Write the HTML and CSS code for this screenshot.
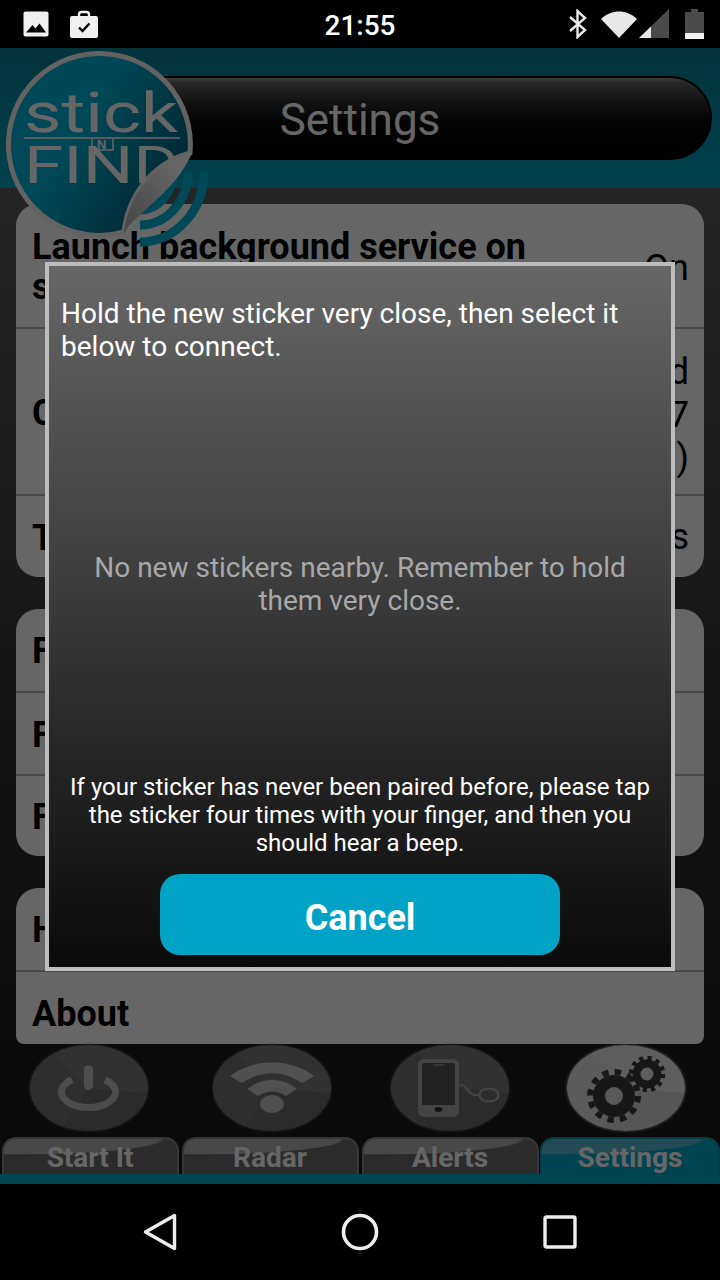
FILE: index.html
```html
<!DOCTYPE html>
<html lang="en">
<head>
    <meta charset="UTF-8">
    <meta name="viewport" content="width=device-width, initial-scale=1.0">
    <title>Settings</title>
    <link rel="stylesheet" href="styles.css">
</head>
<body>
    <div class="phone">
        <div class="status-bar">
            <div class="status-left">
                <svg width="26" height="26" viewBox="0 0 26 26"><rect x="0.5" y="0.5" width="25" height="25" rx="2" fill="#f0f0f0"/><path d="M3 21.5 L9.5 14 L12.5 17.5 L16.5 12.5 L23 21.5 Z" fill="#000"/></svg>
                <svg width="28" height="28" viewBox="0 0 28 28"><path d="M9 8 V4.5 a2.5 2.5 0 0 1 2.5 -2.5 h5 a2.5 2.5 0 0 1 2.5 2.5 V8" fill="none" stroke="#f0f0f0" stroke-width="2.4"/><rect x="0" y="6" width="28" height="22" rx="2" fill="#f0f0f0"/><path d="M9 17.5 l3.5 3.5 l7 -7.5" fill="none" stroke="#000" stroke-width="2.4"/></svg>
            </div>
            <span class="clock">21:55</span>
            <div class="status-right">
                <svg class="ic-bt" width="20" height="30" viewBox="0 0 20 30"><path d="M2 8 L17 21 L9.5 28 V2 L17 9 L2 22" fill="none" stroke="#e8e8e8" stroke-width="2.4"/></svg>
                <svg class="ic-wifi" width="36" height="28" viewBox="0 0 36 28"><path d="M0 9 C10 -1 26 -1 36 9 L18 28 Z" fill="#e8e8e8"/></svg>
                <svg class="ic-signal" width="30" height="30" viewBox="0 0 30 30"><path d="M30 0 V29 H0 Z" fill="#4a4a4a"/><path d="M12 17.5 V29 H0 Z" fill="#e8e8e8"/></svg>
                <svg class="ic-batt" width="19" height="30" viewBox="0 0 19 30"><path d="M6 0 H13 V3 H19 V30 H0 V3 H6 Z" fill="#4a4a4a"/><rect x="0" y="24" width="19" height="6" fill="#f0f0f0"/></svg>
            </div>
        </div>

        <div class="app">
            <header class="app-header">
                <div class="title-pill">Settings</div>
            </header>

            <main class="settings">
                <section class="group">
                    <div class="row row-first">
                        <span class="row-label">Launch background service on startup</span>
                        <span class="row-value">On</span>
                    </div>
                    <div class="row row-tall">
                        <span class="row-label">C</span>
                        <span class="row-value">d<br>7<br>)</span>
                    </div>
                    <div class="row row-last">
                        <span class="row-label">T</span>
                        <span class="row-value">s</span>
                    </div>
                </section>
                <section class="group">
                    <div class="row"><span class="row-label">F</span></div>
                    <div class="row row-last"><span class="row-label">F</span></div>
                    <div class="row"><span class="row-label">F</span></div>
                </section>
                <section class="group group-cut">
                    <div class="row"><span class="row-label">H</span></div>
                    <div class="row row-about"><span class="row-label">About</span></div>
                </section>
            </main>

            <nav class="tabs">
                <div class="tab tab-start">
                    <div class="tab-disc">
                        <svg width="61" height="46" viewBox="0 0 61 46"><path d="M14 14.7 A27 15.5 0 1 0 47 14.7" fill="none" stroke="#fff" stroke-opacity=".55" stroke-width="7"/><rect x="26" y="0" width="9" height="25" rx="4.5" fill="#fff" fill-opacity=".55"/></svg>
                    </div>
                    <div class="tab-label">Start It</div>
                </div>
                <div class="tab tab-radar">
                    <div class="tab-disc">
                        <svg width="84" height="52" viewBox="0 0 84 52"><path d="M0 14 C24 -4 60 -4 84 14 L72 21 C52 8 32 8 12 21 Z M17 27 C32 15 52 15 67 27 L56 34 C47 28 37 28 28 34 Z" fill="#fff" fill-opacity=".6"/><ellipse cx="42" cy="42" rx="12" ry="9" fill="#fff" fill-opacity=".6"/></svg>
                    </div>
                    <div class="tab-label">Radar</div>
                </div>
                <div class="tab">
                    <div class="tab-disc">
                        <svg width="104" height="58" viewBox="-20 0 104 58">
                            <rect x="2" y="2" width="37" height="54" rx="4" fill="#555" stroke="#aaa" stroke-width="4"/>
                            <path d="M2 46 H39 V52 a4 4 0 0 1 -4 4 H6 a4 4 0 0 1 -4 -4 Z" fill="#aaa"/>
                            <ellipse cx="20.5" cy="50.5" rx="4" ry="2.5" fill="#333"/>
                            <path d="M15 6 H26" stroke="#888" stroke-width="2"/>
                            <path d="M41 27 C47 22 50 37 58 36 L62 36" fill="none" stroke="#aaa" stroke-width="2"/>
                            <ellipse cx="71" cy="36" rx="9.5" ry="6.5" fill="none" stroke="#aaa" stroke-width="2.2"/>
                        </svg>
                    </div>
                    <div class="tab-label">Alerts</div>
                </div>
                <div class="tab tab-active">
                    <div class="tab-disc">
                        <svg width="118" height="86" viewBox="0 0 118 86">
                            <circle cx="47" cy="51" r="15" fill="none" stroke="#3a3a3a" stroke-width="12"/>
                            <circle cx="47" cy="51" r="24" fill="none" stroke="#3a3a3a" stroke-width="6" stroke-dasharray="6.3 6.27"/>
                            <circle cx="80" cy="29" r="10.5" fill="none" stroke="#3a3a3a" stroke-width="8"/>
                            <circle cx="80" cy="29" r="16" fill="none" stroke="#3a3a3a" stroke-width="4.5" stroke-dasharray="4.2 4.18"/>
                        </svg>
                    </div>
                    <div class="tab-label">Settings</div>
                </div>
            </nav>
            <div class="tabs-line"></div>

            <svg class="logo" width="216" height="204" viewBox="0 0 216 204">
                <defs>
                    <linearGradient id="logoFill" x1="0.35" y1="0.45" x2="0.85" y2="0.75">
                        <stop offset="0" stop-color="#00b4dc"/>
                        <stop offset="1" stop-color="#006a82"/>
                    </linearGradient>
                    <linearGradient id="curlFill" x1="0.2" y1="0.9" x2="0.8" y2="0.2">
                        <stop offset="0" stop-color="#b8b8b8"/>
                        <stop offset="1" stop-color="#ffffff"/>
                    </linearGradient>
                </defs>
                <path d="M140 194 A64 70 0 0 0 204 124 M140 177 A48 53 0 0 0 188 124 M140 162 A33 38 0 0 0 173 124" fill="none" stroke="#00b4dc" stroke-width="9"/>
                <path d="M190 105 A91 91 0 1 0 124 184 C128 150 150 116 190 105 Z" fill="url(#logoFill)" stroke="#f4f4f4" stroke-width="5"/>
                <text class="logo-word" x="24" y="84" textLength="154" lengthAdjust="spacingAndGlyphs">stick</text>
                <path d="M24 90 H91 M114 90 H180" stroke="#fff" stroke-width="1.5"/>
                <rect x="92" y="90" width="21" height="12" fill="none" stroke="#fff" stroke-width="1.5"/>
                <text class="logo-n" x="97" y="100.5">N</text>
                <text class="logo-word logo-find" x="24" y="135" textLength="156" lengthAdjust="spacingAndGlyphs">FIND</text>
                <path d="M192 105 C150 116 128 150 124 185 C135 165 175 145 192 105 Z" fill="url(#curlFill)"/>
            </svg>

            <div class="scrim"></div>

            <div class="dialog">
                <p class="dialog-intro">Hold the new sticker very close, then select it below to connect.</p>
                <p class="dialog-empty">No new stickers nearby. Remember to hold them very close.</p>
                <p class="dialog-hint">If your sticker has never been paired before, please tap the sticker four times with your finger, and then you should hear a beep.</p>
                <button class="cancel-btn">Cancel</button>
            </div>
        </div>

        <div class="nav-bar">
            <svg width="34" height="38" viewBox="0 0 34 38"><path d="M31.5 2.5 V35.5 L2.5 19 Z" fill="none" stroke="#eee" stroke-width="3.4" stroke-linejoin="round"/></svg>
            <svg width="38" height="38" viewBox="0 0 38 38"><circle cx="19" cy="19" r="16.5" fill="none" stroke="#eee" stroke-width="3.6"/></svg>
            <svg width="34" height="34" viewBox="0 0 34 34"><rect x="2" y="2" width="30" height="30" rx="1.5" fill="none" stroke="#eee" stroke-width="3.4"/></svg>
        </div>
    </div>
</body>
</html>
```

FILE: styles.css
```css
* {
    box-sizing: border-box;
}
html, body {
    margin: 0;
    padding: 0;
    background: #000;
}
body {
    font-family: Roboto, "Noto Sans", sans-serif;
}
.phone {
    width: 720px;
    height: 1280px;
    display: flex;
    flex-direction: column;
    overflow: hidden;
}

/* status bar */
.status-bar {
    height: 48px;
    flex: none;
    display: flex;
    align-items: center;
    justify-content: space-between;
    position: relative;
    background: #000;
    padding: 0 16px 0 23px;
}
.status-left, .status-right {
    display: flex;
    align-items: center;
}
.status-left {
    gap: 21px;
}
.ic-wifi {
    margin-left: 13px;
}
.ic-signal {
    margin-left: 2px;
}
.ic-batt {
    margin-left: 16px;
}
.clock {
    position: absolute;
    left: 0;
    right: 0;
    top: 9px;
    text-align: center;
    color: #fff;
    font-size: 28px;
    font-weight: 500;
}

/* app */
.app {
    position: relative;
    height: 1136px;
    flex: none;
    display: flex;
    flex-direction: column;
    overflow: hidden;
    background: #000;
}
.app-header {
    height: 140px;
    flex: none;
    background: linear-gradient(#0a7f92, #00a4c4);
    padding: 28px 8px 0 28px;
}
.title-pill {
    height: 84px;
    border-radius: 42px;
    border: 2px solid #000;
    background: linear-gradient(#a0a0a0 0, #666 5%, #2c2c2c 30%, #0c0c0c 55%, #000);
    color: #fff;
    font-size: 44px;
    display: flex;
    align-items: center;
    justify-content: center;
    padding: 4px 20px 0 0;
}
.settings {
    height: 856px;
    flex: none;
    overflow: hidden;
    background: linear-gradient(#5c5c5c, #1c1c1c);
    padding: 16px 16px 0;
    display: flex;
    flex-direction: column;
    gap: 32px;
}
.group {
    background: #fff;
    border-radius: 22px;
    flex: none;
}
.group-cut {
    height: 156px;
    overflow: hidden;
    border-radius: 22px 22px 8px 8px;
}
.row {
    min-height: 82px;
    padding: 2px 15px 0 16px;
    display: flex;
    align-items: center;
    justify-content: space-between;
    border-top: 2px solid #b8b8b8;
    color: #000;
    font-size: 36px;
}
.row:first-child {
    border-top: 0;
}
.row-first {
    min-height: 123px;
    align-items: flex-start;
    padding-top: 23px;
}
.row-tall {
    min-height: 167px;
}
.row-tall .row-value {
    padding-top: 6px;
}
.row-last {
    min-height: 83px;
}
.row-about {
    min-height: 84px;
}
.row-label {
    font-weight: 700;
    width: 520px;
    line-height: 40px;
}
.row-value {
    font-weight: 400;
    text-align: right;
    line-height: 43px;
}
.row-first .row-value {
    padding-top: 20px;
}

/* bottom tabs */
.tabs {
    flex: 1;
    display: grid;
    grid-template-columns: repeat(4, 1fr);
    background: #1a1a1a;
}
.tab {
    display: flex;
    flex-direction: column;
    align-items: center;
    justify-content: flex-end;
}
.tab-disc {
    width: 118px;
    height: 86px;
    border-radius: 50%;
    margin-bottom: 6px;
    background: conic-gradient(from -45deg, #7c7c7c 0 140deg, #6c6c6c 140deg 260deg, #747474 260deg);
    box-shadow: 0 0 3px #777;
    display: flex;
    align-items: center;
    justify-content: center;
}
.tab-start .tab-disc {
    margin-right: 3px;
}
.tab-radar .tab-disc {
    margin-left: 3px;
}
.tab-active .tab-disc {
    margin-right: 8px;
    background: conic-gradient(from -45deg, #ececec 0 140deg, #d8d8d8 140deg 260deg, #e4e4e4 260deg);
    box-shadow: 0 0 3px #ddd;
}
.tab-label {
    width: 177px;
    height: 37px;
    border: 2px solid #888;
    border-bottom: 0;
    border-radius: 14px 14px 0 0;
    background: radial-gradient(ellipse 85% 45% at 8% 0, #b4b4b4 0 96%, transparent 100%), #6c6c6c;
    color: #fff;
    font-size: 28px;
    font-weight: 700;
    line-height: 37px;
    text-align: center;
}
.tab-active .tab-label {
    width: 180px;
    border-color: #0a9ab2;
    background: radial-gradient(ellipse 85% 45% at 8% 0, #55bcd0 0 96%, transparent 100%), #00a8ca;
}
.tabs-line {
    height: 10px;
    flex: none;
    background: #00a8ca;
}

/* dialog on top */
.logo {
    position: absolute;
    left: 0;
    top: 0;
}
.logo-word {
    font-family: Roboto, sans-serif;
    font-size: 55px;
    font-weight: 400;
    fill: #fff;
}
.logo-find {
    font-size: 52px;
}
.logo-n {
    font-family: "Liberation Sans", sans-serif;
    font-size: 13px;
    font-weight: 700;
    fill: #fff;
}
.scrim {
    position: absolute;
    inset: 0;
    background: rgba(0, 0, 0, 0.6);
}
.dialog {
    position: absolute;
    left: 45px;
    top: 214px;
    width: 630px;
    height: 709px;
    border: 4px solid #bdbdbd;
    background: linear-gradient(#666, #0a0a0a);
    color: #fff;
    display: flex;
    flex-direction: column;
    align-items: center;
}
.dialog p {
    margin: 0;
}
.dialog-intro {
    align-self: stretch;
    padding: 31px 12px 0;
    font-size: 28px;
    line-height: 33px;
}
.dialog p.dialog-empty {
    margin-top: 188px;
    padding: 0 40px;
    text-align: center;
    font-size: 28px;
    line-height: 33px;
    color: #a8a8a8;
}
.dialog p.dialog-hint {
    margin-top: auto;
    padding: 0 14px;
    text-align: center;
    font-size: 24px;
    line-height: 28px;
}
.cancel-btn {
    width: 400px;
    height: 81px;
    margin: 17px 0 12px;
    padding-top: 8px;
    border: 0;
    border-radius: 20px;
    background: #00a3c5;
    color: #fff;
    font-family: inherit;
    font-size: 36px;
    font-weight: 700;
}
.nav-bar {
    flex: 1;
    background: #000;
    display: flex;
    align-items: center;
    justify-content: center;
    gap: 164px;
}
```
